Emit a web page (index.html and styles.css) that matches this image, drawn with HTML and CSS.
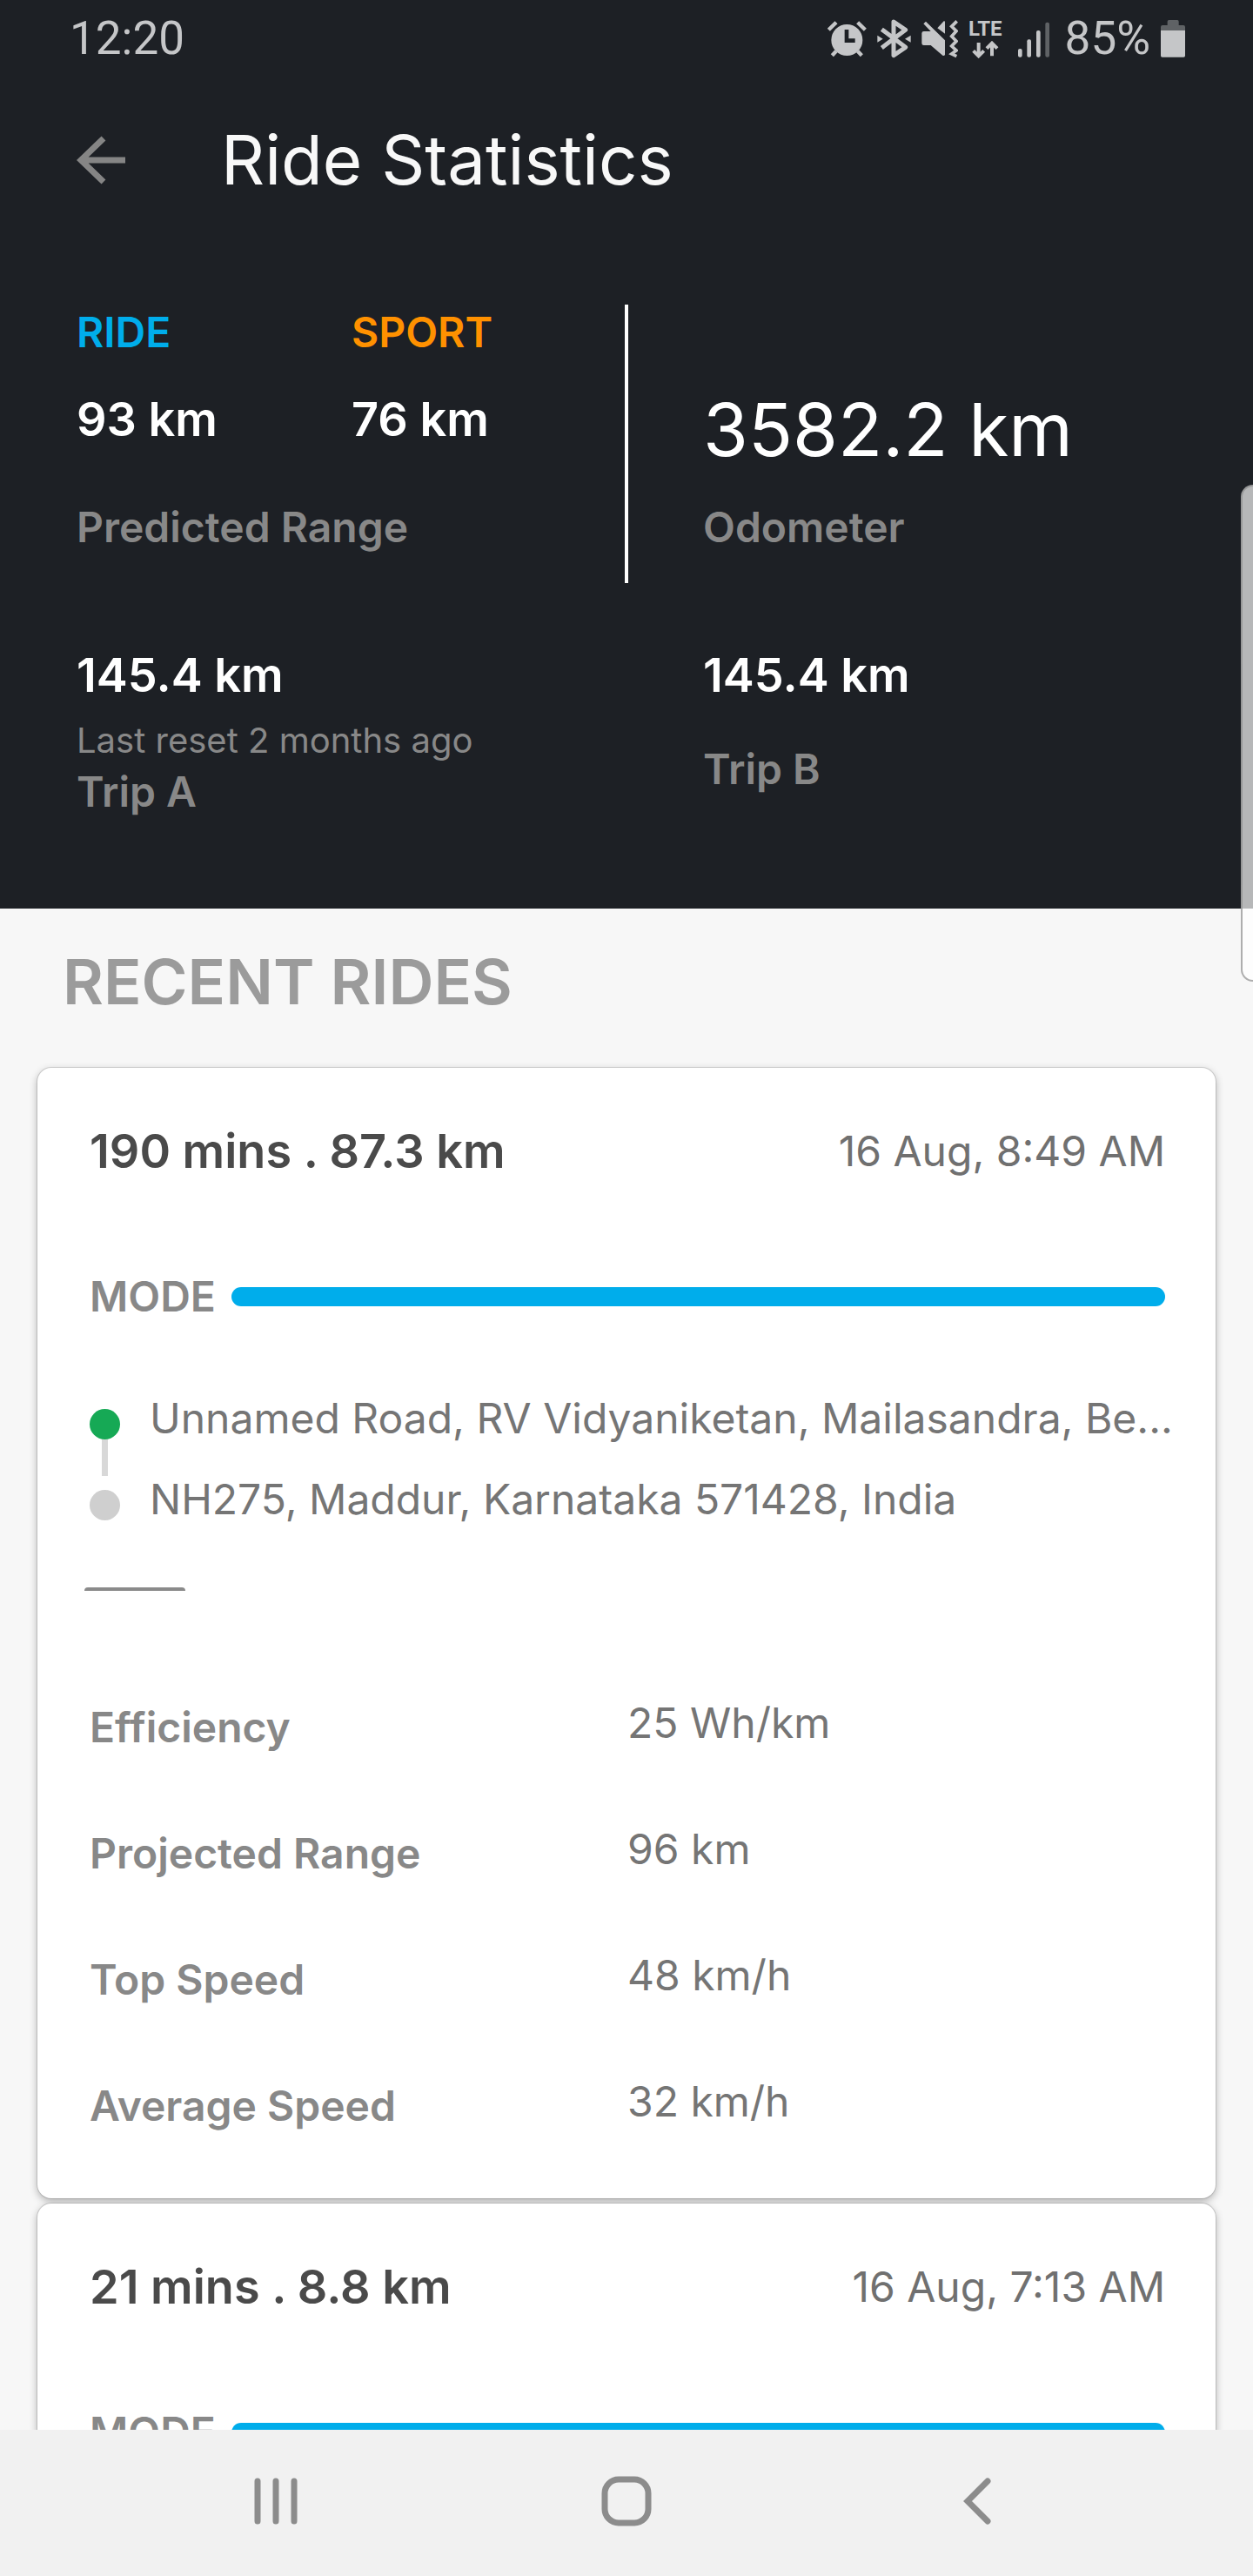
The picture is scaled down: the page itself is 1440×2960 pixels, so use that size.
FILE: index.html
```html
<!DOCTYPE html>
<html lang="en">
<head>
  <meta charset="UTF-8">
  <meta name="viewport" content="width=device-width, initial-scale=1.0">
  <title>Ride Statistics</title>
  <link rel="stylesheet" href="styles.css">
</head>
<body>
  <div class="top">
    <div class="status-bar">
      <span class="clock">12:20</span>
      <div class="status-icons">
        <!-- alarm -->
        <svg width="45" height="45" viewBox="80 60 135 135">
          <circle cx="147" cy="132" r="54" fill="#c5c6c8"/>
          <path d="M84 97 L110 71 M184 71 L210 97" stroke="#c5c6c8" stroke-width="13"/>
          <path d="M110 170 L96 185 M184 170 L198 185" stroke="#c5c6c8" stroke-width="13"/>
          <path d="M146 96 V134 H175" fill="none" stroke="#1d2025" stroke-width="14"/>
        </svg>
        <!-- bluetooth -->
        <svg width="39" height="45" viewBox="252 60 117 135">
          <path d="M268 95 L350 157 L309 185 V69 L350 97 L268 159" fill="none" stroke="#c5c6c8" stroke-width="15" stroke-linejoin="round"/>
          <path d="M253 116 L272 128 L253 140 Z M368 116 L348 128 L368 140 Z" fill="#c5c6c8"/>
        </svg>
        <!-- muted, vibrate -->
        <svg width="42" height="45" viewBox="405 60 126 135">
          <path d="M412 76 L420 68 L486 133 V183 Q483 188 478 185 L437 150 H413 Q406 150 406 143 V109 Q406 102 413 102 H437 Z" fill="#c5c6c8"/>
          <path d="M460 91 L482 67 Q486 65 486 70 V110 Z" fill="#c5c6c8"/>
          <path d="M527 67 L509 85 L525 101 L509 119 L525 136 L509 153 L525 168 L509 180 L526 188" fill="none" stroke="#c5c6c8" stroke-width="11"/>
        </svg>
        <div class="network">
          <span>LTE</span>
          <svg width="31" height="20" viewBox="587 138 93 60">
            <path d="M610 144 V190 M592 172 L610 190 L628 172" fill="none" stroke="#c5c6c8" stroke-width="12"/>
            <path d="M656 190 V146 M638 164 L656 146 L674 164" fill="none" stroke="#c5c6c8" stroke-width="12"/>
          </svg>
        </div>
        <!-- signal -->
        <svg width="48" height="45" viewBox="726 60 144 135">
          <rect x="744" y="162" width="14" height="29" rx="6" fill="#c5c6c8"/>
          <rect x="775" y="130" width="14" height="61" rx="6" fill="#c5c6c8"/>
          <rect x="807" y="99" width="14" height="92" rx="6" fill="#c5c6c8"/>
          <rect x="838" y="71" width="14" height="120" rx="6" fill="#5f6265"/>
        </svg>
        <span class="battery-text">85%</span>
        <!-- battery -->
        <svg width="28" height="45" viewBox="1239 60 84 135">
          <path d="M1239 99 V87 Q1239 81 1245 81 H1262 V68 Q1262 63 1267 63 H1296 Q1301 63 1301 68 V81 H1317 Q1323 81 1323 87 V99 Z" fill="#5f6265"/>
          <path d="M1239 99 H1323 V186 Q1323 191 1318 191 H1244 Q1239 191 1239 186 Z" fill="#c5c6c8"/>
        </svg>
      </div>
    </div>

    <header class="app-bar">
      <button type="button" class="back" aria-label="Back">
        <svg width="56" height="56" viewBox="0 0 56 56">
          <path d="M56 28 H5 M31 3 L5 28 L31 53" fill="none" stroke="#858585" stroke-width="7"/>
        </svg>
      </button>
      <h1>Ride Statistics</h1>
    </header>

    <section class="stats">
      <div class="range">
        <div class="modes">
          <div class="mode-item">
            <p class="mode-name ride">RIDE</p>
            <p class="value">93 km</p>
          </div>
          <div class="mode-item">
            <p class="mode-name sport">SPORT</p>
            <p class="value">76 km</p>
          </div>
        </div>
        <p class="label">Predicted Range</p>
      </div>
      <div class="odometer">
        <p class="big-value">3582.2 km</p>
        <p class="label">Odometer</p>
      </div>
      <div class="trip">
        <p class="value">145.4 km</p>
        <p class="reset">Last reset 2 months ago</p>
        <p class="label">Trip A</p>
      </div>
      <div class="trip trip-b">
        <p class="value">145.4 km</p>
        <p class="label">Trip B</p>
      </div>
    </section>
  </div>

  <main class="rides">
    <h2>RECENT RIDES</h2>

    <article class="card">
      <div class="card-head">
        <h3>190 mins . 87.3 km</h3>
        <time>16 Aug, 8:49 AM</time>
      </div>
      <div class="mode">
        <span class="label">MODE</span>
        <div class="bar"></div>
      </div>
      <div class="route">
        <div class="markers">
          <span class="dot start"></span>
          <span class="line"></span>
          <span class="dot end"></span>
        </div>
        <div class="places">
          <p>Unnamed Road, RV Vidyaniketan, Mailasandra, Be...</p>
          <p>NH275, Maddur, Karnataka 571428, India</p>
        </div>
      </div>
      <hr>
      <dl class="details">
        <dt>Efficiency</dt>
        <dd>25 Wh/km</dd>
        <dt>Projected Range</dt>
        <dd>96 km</dd>
        <dt>Top Speed</dt>
        <dd>48 km/h</dd>
        <dt>Average Speed</dt>
        <dd>32 km/h</dd>
      </dl>
    </article>

    <article class="card">
      <div class="card-head">
        <h3>21 mins . 8.8 km</h3>
        <time>16 Aug, 7:13 AM</time>
      </div>
      <div class="mode">
        <span class="label">MODE</span>
        <div class="bar"></div>
      </div>
    </article>
  </main>

  <nav class="nav-bar">
    <button type="button" aria-label="Recent apps">
      <svg width="58" height="58" viewBox="0 0 58 58">
        <path d="M8 6 V52 M29 6 V52 M50 6 V52" stroke="#8c8c8c" stroke-width="7" stroke-linecap="round"/>
      </svg>
    </button>
    <button type="button" aria-label="Home">
      <svg width="58" height="58" viewBox="0 0 58 58">
        <rect x="4" y="4" width="50" height="50" rx="16" fill="none" stroke="#8c8c8c" stroke-width="7"/>
      </svg>
    </button>
    <button type="button" aria-label="Back">
      <svg width="58" height="58" viewBox="0 0 58 58">
        <path d="M41 6 L18 29 L41 52" fill="none" stroke="#8c8c8c" stroke-width="7" stroke-linecap="round"/>
      </svg>
    </button>
  </nav>

  <div class="edge-handle"></div>
</body>
</html>
```
FILE: styles.css
```css
* {
    box-sizing: border-box;
}
body {
    margin: 0;
    height: 100vh;
    display: flex;
    flex-direction: column;
    overflow: hidden;
    background: #f7f7f7;
    font-family: Inter, "Open Sans", sans-serif;
    font-size: 48px;
    line-height: 56px;
    color: #757575;
}
h1, h2, h3, p, dl, dd {
    margin: 0;
}
button {
    padding: 0;
    border: none;
    background: none;
    cursor: pointer;
}
svg {
    display: block;
}

/* dark top part */
.top {
    flex: none;
    background: #1d2025;
    color: #fff;
}
.status-bar {
    display: flex;
    justify-content: space-between;
    align-items: center;
    height: 88px;
    padding: 0 78px 0 80px;
    font-family: Roboto, sans-serif;
    font-size: 53px;
    color: #c5c6c8;
}
.status-icons {
    display: flex;
    align-items: center;
    gap: 12px;
}
.network {
    display: flex;
    flex-direction: column;
    align-items: center;
    gap: 2px;
    font-size: 24px;
    font-weight: 700;
    line-height: 24px;
}
.app-bar {
    display: flex;
    align-items: center;
    gap: 110px;
    height: 192px;
    padding: 0 88px;
}
.app-bar h1 {
    font-size: 78px;
    line-height: 88px;
    font-weight: 400;
    color: #f8f8f8;
}
.stats {
    display: grid;
    grid-template-columns: 1fr 1fr;
    padding: 70px 0 106px;
}
.range, .odometer {
    display: flex;
    flex-direction: column;
    justify-content: flex-end;
    height: 320px;
    padding: 0 88px 36px;
}
.range {
    gap: 64px;
    margin-right: -2px;
    border-right: 4px solid #fff;
}
.odometer {
    gap: 34px;
}
.modes {
    display: grid;
    grid-template-columns: 1fr 1fr;
    column-gap: 90px;
}
.mode-item {
    display: flex;
    flex-direction: column;
    gap: 40px;
    white-space: nowrap;
}
.mode-name {
    font-weight: 600;
}
.ride {
    color: #00adeb;
}
.sport {
    color: #ff9100;
}
.value {
    font-size: 54px;
    line-height: 64px;
    font-weight: 600;
}
.big-value {
    font-size: 84px;
    line-height: 100px;
}
.label {
    font-weight: 600;
    color: #888;
}
.trip {
    padding: 74px 88px 0;
}
.reset {
    margin: 20px 0 8px;
    font-size: 40px;
    line-height: 46px;
    color: #888;
}
.trip-b .label {
    margin-top: 48px;
}

/* ride list */
.rides {
    flex: 1;
    min-height: 0;
    overflow: hidden;
    padding: 44px 43px 0;
}
.rides h2 {
    margin: 0 29px 59px;
    font-size: 72px;
    line-height: 80px;
    font-weight: 600;
    color: #9b9b9b;
}
.card {
    margin-bottom: 6px;
    padding: 64px 58px 78px 60px;
    background: #fff;
    border-radius: 16px;
    box-shadow: 0 0 0 1px rgba(0, 0, 0, 0.12), 0 3px 10px rgba(0, 0, 0, 0.3);
}
.card-head {
    display: flex;
    justify-content: space-between;
    align-items: center;
}
.card-head h3 {
    font-size: 54px;
    line-height: 64px;
    font-weight: 600;
    color: #4a4a4a;
}
.card-head time {
    color: #707070;
}
.mode {
    display: flex;
    align-items: center;
    gap: 16px;
    margin-top: 107px;
}
.mode .label {
    min-width: 147px;
}
.bar {
    flex: 1;
    height: 22px;
    border-radius: 11px;
    background: #00adeb;
}
.route {
    display: flex;
    gap: 34px;
    margin-top: 84px;
}
.markers {
    display: flex;
    flex-direction: column;
    align-items: center;
    padding-top: 17px;
}
.dot {
    width: 35px;
    height: 35px;
    border-radius: 50%;
}
.start {
    background: #16a955;
}
.end {
    background: #cfcfcf;
}
.line {
    width: 7px;
    height: 42px;
    margin-bottom: 16px;
    background: #d8d8d8;
}
.places {
    display: flex;
    flex-direction: column;
    gap: 37px;
    white-space: nowrap;
}
.card hr {
    width: 116px;
    height: 4px;
    margin: 73px 0 124px -6px;
    border: none;
    border-radius: 4px 4px 0 0;
    background: #8a8a8a;
}
.details {
    display: grid;
    grid-template-columns: 1fr 1fr;
    row-gap: 84px;
}
.details dt {
    padding-top: 5px;
    font-weight: 600;
    color: #888;
}

/* android navigation */
.nav-bar {
    flex: none;
    display: grid;
    grid-template-columns: repeat(3, 1fr);
    height: 168px;
    padding: 0 8% 4px;
    background: #f1f1f1;
}
.nav-bar button {
    display: flex;
    justify-content: center;
    align-items: center;
}

.edge-handle {
    position: absolute;
    top: 557px;
    right: 0;
    width: 14px;
    height: 571px;
    border: 2px solid rgba(140, 140, 140, 0.7);
    border-right: none;
    border-radius: 14px 0 0 14px;
    background: rgba(255, 255, 255, 0.68);
}
```
